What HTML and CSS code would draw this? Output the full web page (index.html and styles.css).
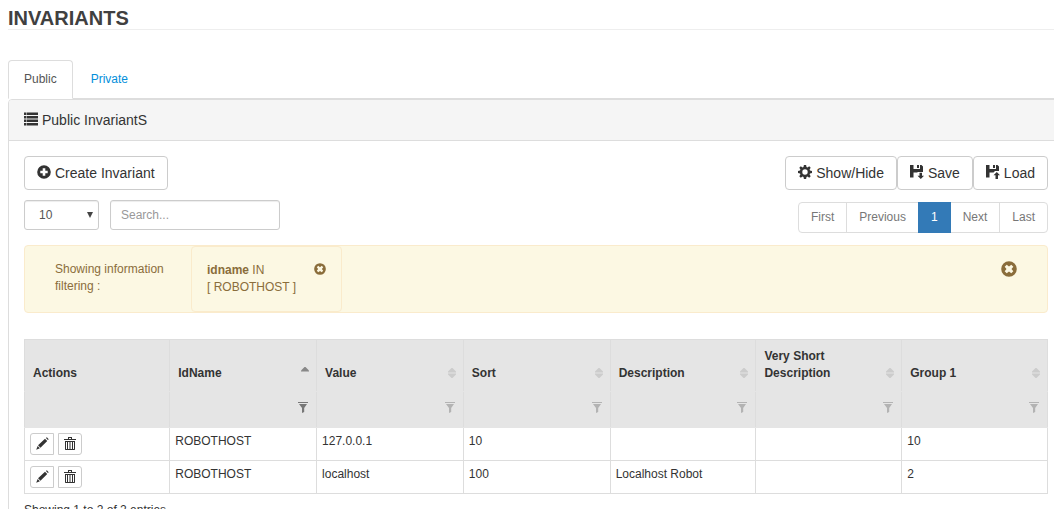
FILE: index.html
```html
<!DOCTYPE html>
<html lang="en">
<head>
<meta charset="utf-8">
<title>Invariants</title>
<link rel="stylesheet" href="styles.css">
</head>
<body>
<svg class="sprite" aria-hidden="true">
  <symbol id="list" viewBox="0 0 14 14"><path d="M0 .5h2.500v2.500H0zM3 .5h11v2.500H3zM0 4h2.500v2.500H0zM3 4h11v2.500H3zM0 7.500h2.500V10H0zM3 7.500h11V10H3zM0 11h2.500v2.500H0zM3 11h11v2.500H3z"/></symbol>
  <symbol id="plus" viewBox="0 0 14 14"><path fill-rule="evenodd" d="M7 .2a6.800 6.800 0 1 0 0 13.600A6.800 6.800 0 0 0 7 .2zM5.700 3.300h2.600v2.400h2.400v2.600H8.300v2.400H5.700V8.300H3.300V5.700h2.400z"/></symbol>
  <symbol id="close" viewBox="0 0 16 16"><path fill-rule="evenodd" d="M8 .2a7.800 7.800 0 1 0 0 15.600A7.800 7.800 0 0 0 8 .2zM5.700 3.700L8 5.500l2.300-1.800 2 2L10.500 8l1.800 2.300-2 2L8 10.500l-2.300 1.800-2-2L5.500 8 3.700 5.700z"/></symbol>
  <symbol id="gear" viewBox="0 0 14 14"><path fill-rule="evenodd" d="M5.900 0h2.200l.4 2 1 .4 1.700-1.100 1.500 1.500-1.100 1.700.4 1 2 .4v2.200l-2 .4-.4 1 1.100 1.700-1.500 1.500-1.700-1.100-1 .4-.4 2H5.900l-.4-2-1-.4-1.700 1.100-1.500-1.500 1.100-1.700-.4-1-2-.4V5.900l2-.4.4-1-1.100-1.700 1.500-1.500 1.700 1.100 1-.4zM7 4.300a2.700 2.700 0 1 0 0 5.400 2.700 2.700 0 0 0 0-5.400z"/></symbol>
  <symbol id="save" viewBox="0 0 14 14"><path d="M0 0h3.500v4h6.500V0h1.500L13 1.500V7H7.500V7.500H3.500V12.500H0zM7 0h2v3H7zM9.500 7.800h2.500V10.700h2L10.800 14 7.500 10.700h2z"/></symbol>
  <symbol id="load" viewBox="0 0 14 14"><path d="M0 0h3.500v4h6.500V0h1.500L13 1.500V6H9L7.500 7.500H3.500v5H0zM7 0h2v3H7zM10.800 7L14 10.300h-2V14H9.500v-3.700h-2z"/></symbol>
  <symbol id="pencil" viewBox="0 0 14 14"><path d="M10.700 1.200l1-.9 2 2-.9 1zM9.700 2l2.400 2.400-7.300 7.100-2.600-2.600zM1.800 9.600l2.400 2.400-4 1.800z"/></symbol>
  <symbol id="trash" viewBox="0 0 12 14"><path d="M4 0h4v2h4v1H0V2h4zM5 1v1h2V1zM1 4h10v8.500l-.5.500h-9l-.5-.500zM2 5v7h1V5zM4 5v7h1.500V5zM6.500 5v7H8V5zM9 5v7h1V5z" fill-rule="evenodd"/></symbol>
  <symbol id="funnel" viewBox="0 0 10 11"><path d="M0 0h10v1H0zM1 2h8L6.200 6v4L4 11V6z"/></symbol>
  <symbol id="sort" viewBox="0 0 8 10"><path d="M3.500 0h1L8 3.500v1H0v-1zM0 5.500h8v1L4.500 10h-1L0 6.500z"/></symbol>
  <symbol id="asc" viewBox="0 0 8 10"><path d="M3.500 0h1L8 3.500v1H0v-1z"/></symbol>
</svg>

<h1 class="page-title">INVARIANTS</h1>

<nav class="tabs">
  <a class="tab tab-active" href="#public">Public</a>
  <a class="tab" href="#private">Private</a>
</nav>

<section class="panel" id="public">
  <h2 class="panel-heading"><svg class="icon"><use href="#list"/></svg>Public InvariantS</h2>
  <div class="panel-body">
    <div class="toolbar">
      <button class="btn"><svg class="icon"><use href="#plus"/></svg>Create Invariant</button>
      <div class="btn-row">
        <button class="btn"><svg class="icon"><use href="#gear"/></svg>Show/Hide</button>
        <button class="btn"><svg class="icon"><use href="#save"/></svg>Save</button>
        <button class="btn"><svg class="icon"><use href="#load"/></svg>Load</button>
      </div>
    </div>
    <div class="toolbar controls">
      <div class="filters">
        <div class="select-wrap">
          <select class="field length" aria-label="Entries per page"><option>10</option><option>25</option><option>50</option></select>
        </div>
        <input class="field search" type="text" placeholder="Search..." aria-label="Search">
      </div>
      <nav class="pagination" aria-label="Pages">
        <a class="page" href="#first">First</a>
        <a class="page" href="#previous">Previous</a>
        <a class="page page-active" href="#1">1</a>
        <a class="page" href="#next">Next</a>
        <a class="page" href="#last">Last</a>
      </nav>
    </div>

    <div class="alert">
      <div class="alert-label">Showing information filtering :</div>
      <div class="chip">
        <div><strong>idname</strong> IN<br>[ ROBOTHOST ]</div>
        <button class="clear" aria-label="Remove idname filter"><svg class="icon-small"><use href="#close"/></svg></button>
      </div>
      <button class="clear clear-all" aria-label="Clear all filters"><svg class="icon-large"><use href="#close"/></svg></button>
    </div>

    <table class="grid">
      <colgroup><col class="col-actions"><col class="col-wide"><col class="col-wide"><col class="col-wide"><col><col><col></colgroup>
      <thead>
        <tr class="names">
          <th scope="col">Actions</th>
          <th scope="col"><div class="head">IdName<svg class="sort sort-on"><use href="#asc"/></svg></div></th>
          <th scope="col"><div class="head">Value<svg class="sort"><use href="#sort"/></svg></div></th>
          <th scope="col"><div class="head">Sort<svg class="sort"><use href="#sort"/></svg></div></th>
          <th scope="col"><div class="head">Description<svg class="sort"><use href="#sort"/></svg></div></th>
          <th scope="col"><div class="head">Very Short Description<svg class="sort"><use href="#sort"/></svg></div></th>
          <th scope="col"><div class="head">Group 1<svg class="sort"><use href="#sort"/></svg></div></th>
        </tr>
        <tr class="funnels">
          <td></td>
          <td><button class="funnel funnel-on" aria-label="Filter IdName"><svg><use href="#funnel"/></svg></button></td>
          <td><button class="funnel" aria-label="Filter Value"><svg><use href="#funnel"/></svg></button></td>
          <td><button class="funnel" aria-label="Filter Sort"><svg><use href="#funnel"/></svg></button></td>
          <td><button class="funnel" aria-label="Filter Description"><svg><use href="#funnel"/></svg></button></td>
          <td><button class="funnel" aria-label="Filter Very Short Description"><svg><use href="#funnel"/></svg></button></td>
          <td><button class="funnel" aria-label="Filter Group 1"><svg><use href="#funnel"/></svg></button></td>
        </tr>
      </thead>
      <tbody>
        <tr>
          <td><div class="actions"><button class="mini edit" aria-label="Edit"><svg class="pencil"><use href="#pencil"/></svg></button><button class="mini delete" aria-label="Delete"><svg class="trash"><use href="#trash"/></svg></button></div></td>
          <td>ROBOTHOST</td><td>127.0.0.1</td><td>10</td><td></td><td></td><td>10</td>
        </tr>
        <tr>
          <td><div class="actions"><button class="mini edit" aria-label="Edit"><svg class="pencil"><use href="#pencil"/></svg></button><button class="mini delete" aria-label="Delete"><svg class="trash"><use href="#trash"/></svg></button></div></td>
          <td>ROBOTHOST</td><td>localhost</td><td>100</td><td>Localhost Robot</td><td></td><td>2</td>
        </tr>
      </tbody>
    </table>
    <p class="info">Showing 1 to 2 of 2 entries</p>
  </div>
</section>
</body>
</html>
```
FILE: styles.css
```css
* { box-sizing: border-box; }
html { overflow-x: hidden; scrollbar-width: none; }
body {
  margin: 0 0 0 8px;
  overflow-x: hidden;
  font: 12px/17px "Liberation Sans", Arial, sans-serif;
  color: #333;
  background: #fff;
}
button, input, select { font: inherit; color: inherit; margin: 0; }
button { cursor: pointer; }
svg { display: block; fill: currentColor; flex: none; }
.sprite { position: absolute; width: 0; height: 0; }
.icon { width: 14px; height: 14px; }
.icon-small { width: 12px; height: 12px; }
.icon-large { width: 16px; height: 16px; }

.page-title {
  margin: 0 0 30px;
  padding-top: 7px;
  border-bottom: 1px solid #eee;
  color: #404040;
  font-size: 20px;
  line-height: 22px;
}

.tabs { display: flex; gap: 2px; border-bottom: 1px solid #ddd; }
.tab {
  margin-bottom: -1px;
  padding: 10px 15px;
  border: 1px solid transparent;
  border-radius: 4px 4px 0 0;
  line-height: 17px;
  color: #048fdb;
  text-decoration: none;
}
.tab-active { border-color: #ddd #ddd #fff; background: #fff; color: #555; }

.panel { margin-right: -10px; border: 1px solid #ddd; border-radius: 4px; }
.panel-heading {
  display: flex;
  align-items: flex-start;
  gap: 4px;
  margin: 0;
  padding: 10px 15px;
  border-bottom: 1px solid #ddd;
  border-radius: 3px 3px 0 0;
  background: #f5f5f5;
  font-size: 14px;
  font-weight: normal;
  line-height: 20px;
}
.panel-body { padding: 15px; }

.toolbar { display: flex; justify-content: space-between; align-items: flex-start; margin-bottom: 10px; }
.controls { margin-bottom: 12px; }
.btn-row { display: flex; }
.btn {
  display: flex;
  gap: 4px;
  padding: 6px 12px;
  border: 1px solid #ccc;
  border-radius: 4px;
  background: #fff;
  font-size: 14px;
  line-height: 20px;
}
.btn .icon, .panel-heading .icon { margin-top: 2px; }

.filters { display: flex; gap: 11px; }
.select-wrap { position: relative; }
.select-wrap::after {
  content: "";
  position: absolute;
  top: 12px;
  right: 6px;
  border: 3px solid transparent;
  border-top: 6px solid #444;
  border-bottom: 0;
  pointer-events: none;
}
.field {
  height: 30px;
  padding: 5px 10px;
  border: 1px solid #ccc;
  border-radius: 3px;
  background: #fff;
  box-shadow: inset 0 1px 1px rgba(0, 0, 0, .075);
  color: #555;
}
.length { width: 75px; padding-left: 14px; appearance: none; }
.search { width: 170px; }
.search::placeholder { color: #999; opacity: 1; }

.pagination { display: flex; padding-top: 2px; }
.page {
  padding: 6px 12px;
  border: 1px solid #ddd;
  margin-left: -1px;
  color: #777;
  text-decoration: none;
}
.page:first-child { border-radius: 4px 0 0 4px; }
.page:last-child { border-radius: 0 4px 4px 0; }
.page-active { z-index: 1; border-color: #337ab7; background: #337ab7; color: #fff; }

.alert {
  display: flex;
  align-items: flex-start;
  margin-bottom: 26px;
  border: 1px solid #faebcc;
  border-radius: 4px;
  background: #fcf8e3;
  color: #8a6d3b;
}
.alert-label { width: 166px; padding: 15px 20px 15px 30px; }
.chip {
  display: flex;
  justify-content: space-between;
  align-items: flex-start;
  width: 151px;
  padding: 15px;
  border: 1px solid #faebcc;
  border-radius: 4px;
}
.clear { padding: 1px 0; border: 0; background: none; }
.clear-all { margin: 14px 30px 0 auto; }

.grid { width: 100%; table-layout: fixed; border-collapse: collapse; }
.col-actions { width: 14.2%; }
.col-wide { width: 14.35%; }
.grid th, .grid td { padding: 5px; border: 1px solid #ddd; text-align: left; vertical-align: top; }
.grid thead { background: #e5e5e5; }
.grid .names th { padding: 8px 7px 9px 8px; border-bottom-color: #e5e5e5; vertical-align: bottom; }
.head { display: flex; justify-content: space-between; align-items: flex-end; }
.sort { width: 8px; height: 10px; margin-bottom: 4px; color: #ccc; }
.sort-on { margin-bottom: 5px; color: #888; }
.grid .funnels td { height: 36px; padding: 10px 8px; border-top-color: #e5e5e5; border-bottom-color: #e5e5e5; }
.funnel { display: block; margin-left: auto; padding: 0; border: 0; background: none; color: #b3b3b3; }
.funnel svg { width: 10px; height: 11px; }
.funnel-on { color: #777; }
.actions { display: flex; gap: 4px; }
.mini {
  display: flex;
  justify-content: center;
  width: 24px;
  height: 22px;
  padding: 3px 0;
  border: 1px solid #ccc;
  background: #fff;
}
.edit { border-radius: 3px 0 0 3px; }
.delete { border-radius: 0 3px 3px 0; }
.pencil { width: 13px; height: 13px; }
.trash { width: 12px; height: 14px; }
.info { margin: 8px 0 0; }
```
